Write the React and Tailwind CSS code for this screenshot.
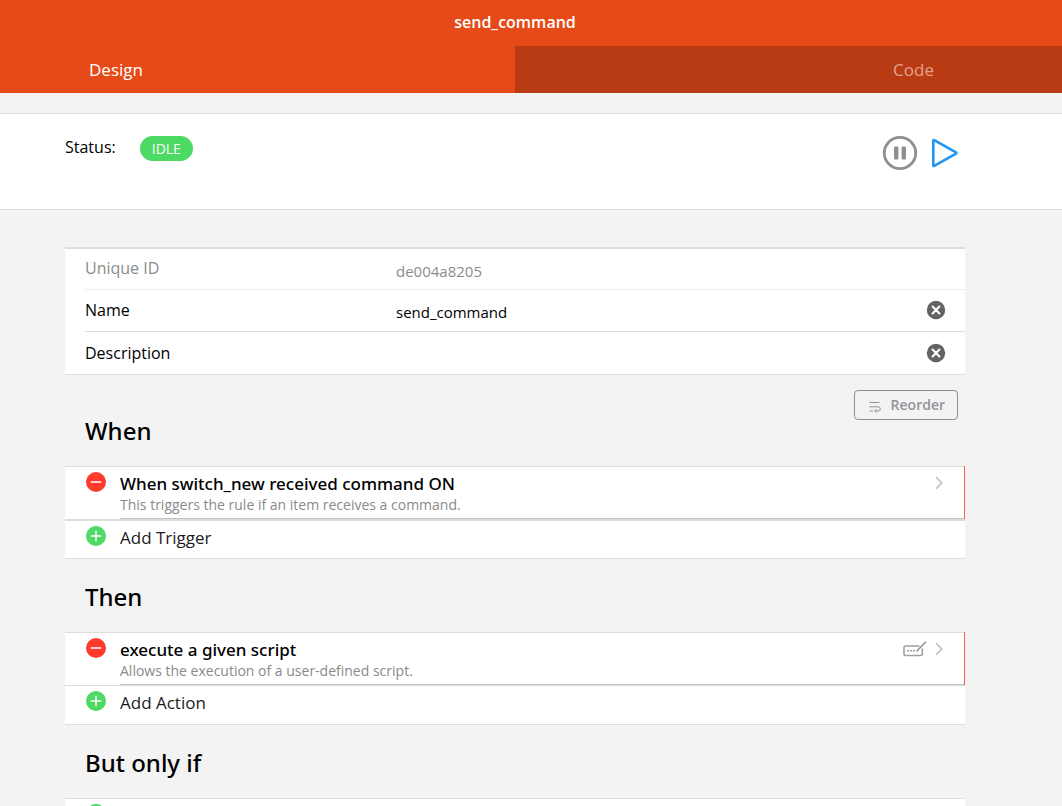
import React from "react";

function PauseCircleIcon() {
  return (
    <svg className="size-9" viewBox="0 0 36 36" aria-hidden="true">
      <circle cx="18" cy="18" r="15.7" fill="none" stroke="#8e8e93" strokeWidth="2.8" />
      <rect x="12" y="11.5" width="4.4" height="13" rx="1" fill="#8e8e93" />
      <rect x="19.6" y="11.5" width="4.4" height="13" rx="1" fill="#8e8e93" />
    </svg>
  );
}

function PlayIcon() {
  return (
    <svg className="h-9 w-7" viewBox="0 0 28 36" aria-hidden="true">
      <path
        d="M2.3 5.6 V30.4 Q2.3 31.3 3.2 30.8 L25 18.6 Q26 18 25 17.4 L3.2 5.2 Q2.3 4.7 2.3 5.6 Z"
        fill="none"
        stroke="#2196f3"
        strokeWidth="2.6"
        strokeLinejoin="round"
      />
    </svg>
  );
}

function ClearIcon() {
  return (
    <svg className="size-5" viewBox="0 0 20 20" aria-hidden="true">
      <circle cx="10" cy="10" r="9.2" fill="#636366" />
      <path d="M6.6 6.6 L13.4 13.4 M13.4 6.6 L6.6 13.4" stroke="#fff" strokeWidth="2.1" strokeLinecap="round" />
    </svg>
  );
}

function MinusIcon() {
  return (
    <svg className="size-5" viewBox="0 0 20 20" aria-hidden="true">
      <circle cx="10" cy="10" r="10" fill="#ff3b30" />
      <path d="M5.3 10 H14.7" stroke="#fff" strokeWidth="1.5" strokeLinecap="round" />
    </svg>
  );
}

function PlusIcon() {
  return (
    <svg className="size-5" viewBox="0 0 20 20" aria-hidden="true">
      <circle cx="10" cy="10" r="10" fill="#4cd964" />
      <path d="M5.3 10 H14.7 M10 5.3 V14.7" stroke="#fff" strokeWidth="1.5" strokeLinecap="round" />
    </svg>
  );
}

function ChevronIcon() {
  return (
    <svg className="h-3.5 w-2" viewBox="0 0 8 14" fill="none" aria-hidden="true">
      <path d="M1 1.2 L6.8 7 L1 12.8" stroke="#c7c7cc" strokeWidth="1.8" />
    </svg>
  );
}

function ScriptIcon() {
  return (
    <svg className="h-4 w-6" viewBox="0 0 24 16" fill="none" stroke="#a0a0a4" aria-hidden="true">
      <path d="M16.5 5 H2.5 Q1 5 1 6.5 V13 Q1 14.5 2.5 14.5 H17.5 Q19.3 14.5 19.3 12.8 V7.5" strokeWidth="1.6" />
      <path d="M23 0.8 L15 8.8 L13.6 10.4" stroke="#8e8e93" strokeWidth="1.5" />
      <path d="M4 9.8 H6 M7 9.8 H9 M10 9.8 H12" strokeWidth="1.6" />
    </svg>
  );
}

function ReorderIcon() {
  return (
    <svg className="mt-1 h-3 w-3" viewBox="0 0 12 12" fill="none" stroke="#8e8e93" aria-hidden="true">
      <path d="M0.5 1.5 H10.5 M0.5 5.8 H9.3 Q11.3 5.8 11.3 7.9 Q11.3 10 9.3 10 H6.3 M0.5 10 H4 M7.5 8.2 L5.7 10 L7.5 11.8" />
    </svg>
  );
}

function Field({ id, label, value, disabled, last }) {
  return (
    <li className="pl-5">
      <div
        className={
          "flex items-center pr-5 " +
          (last
            ? "h-[42px]"
            : disabled
              ? "h-[41px] border-b border-[#efefef]"
              : "h-[42px] border-b border-[#dedede]")
        }
      >
        <label
          htmlFor={id}
          className={
            "w-[311px] shrink-0 text-base " + (last ? "" : "pb-0.5 ") + (disabled ? "text-[#8c8c8c]" : "text-black")
          }
        >
          {label}
        </label>
        <input
          id={id}
          defaultValue={value}
          disabled={disabled}
          className={
            "min-w-0 flex-1 bg-transparent pt-1 text-[15px] outline-none " +
            (disabled ? "text-[#8c8c8c]" : "text-black")
          }
        />
        {!disabled && (
          <button type="button" aria-label={"Clear " + label} className={"-mr-px " + (last ? "" : "pb-0.5")}>
            <ClearIcon />
          </button>
        )}
      </div>
    </li>
  );
}

function Module({ title, description, script }) {
  return (
    <li className="relative flex pl-[21px]">
      <button type="button" aria-label={"Remove " + title} className="mt-[5px] size-5 shrink-0">
        <MinusIcon />
      </button>
      <a href="#module" className="ml-3.5 flex h-[52px] min-w-0 flex-1 border-b border-[#c4c4c4] pr-[22px]">
        <span className="min-w-0 flex-1 pt-1.5">
          <span className="block font-['Noto_Sans','Open_Sans',sans-serif] text-[17px]/[22px] font-medium text-black">
            {title}
          </span>
          <span className="block text-sm/5 text-[#8a8a8a]">{description}</span>
        </span>
        <span className="mt-2 flex h-4 items-center gap-2">
          {script && <ScriptIcon />}
          <ChevronIcon />
        </span>
      </a>
      <span className="absolute -top-px right-0 bottom-0 w-px bg-[#ff5a50]" />
    </li>
  );
}

function AddRow({ label, name, divider }) {
  return (
    <button
      type="button"
      aria-label={name}
      className={
        "flex h-[39px] w-full gap-3.5 border-[#dedede] pt-[5px] pl-[21px] text-left " +
        (divider === "thick" ? "border-t-2" : divider === "thin" ? "border-t" : "")
      }
    >
      <PlusIcon />
      {label && <span className="text-[17px]/6 text-[#1c1c1c]">{label}</span>}
    </button>
  );
}

function Section({ title, children }) {
  return (
    <section className="mb-[73px]">
      <h2 className="flex h-0 items-end pl-5 font-['Noto_Sans','Open_Sans',sans-serif] text-2xl font-medium text-black">
        <span className="mb-[19px]">{title}</span>
      </h2>
      <ul className="border-y border-[#dedede] bg-white">{children}</ul>
    </section>
  );
}

export default function App() {
  return (
    <div className="h-screen overflow-hidden bg-[#f3f3f3] font-['Open_Sans','Noto_Sans',sans-serif]">
      <header className="bg-[#e64a19] text-white">
        <h1 className="h-[46px] pr-8 text-center text-base/[44px] font-semibold">send_command</h1>
        <nav className="flex h-[47px] text-[17px]">
          <button type="button" className="w-[calc(50%-16px)] pl-[89px] text-left">
            Design
          </button>
          <button type="button" className="flex-1 bg-[#b83b14] pr-32 text-right text-[#e3a18c]">
            Code
          </button>
        </nav>
      </header>

      <section className="mt-5 h-[97px] border-y border-[#dedede] bg-white pr-8">
        <div className="mx-auto flex max-w-[900px] items-start pt-[21px]">
          <span className="text-base/6">Status:</span>
          <span className="mt-px ml-6 flex h-[25px] items-center rounded-full bg-[#4cd964] px-3 text-sm text-white">
            IDLE
          </span>
          <span className="flex-1" />
          <button type="button" aria-label="Pause">
            <PauseCircleIcon />
          </button>
          <button type="button" aria-label="Run" className="mr-1.5 ml-[13px]">
            <PlayIcon />
          </button>
        </div>
      </section>

      <main className="pr-8">
        <div className="mx-auto max-w-[900px]">
          <ul className="mt-[37px] border-t-2 border-b border-[#dedede] bg-white">
            <Field id="uid" label="Unique ID" value="de004a8205" disabled />
            <Field id="name" label="Name" value="send_command" />
            <Field id="description" label="Description" value="" last />
          </ul>

          <div className="mt-[15px] mb-[46px] flex justify-end pr-[7px]">
            <button
              type="button"
              className="flex h-[30px] items-center gap-2.5 rounded border border-[#8e8e93] px-3 pl-3.5 text-sm font-semibold text-[#939398]"
            >
              <ReorderIcon />
              Reorder
            </button>
          </div>

          <Section title="When">
            <Module
              title="When switch_new received command ON"
              description="This triggers the rule if an item receives a command."
            />
            <li>
              <AddRow label="Add Trigger" divider="thick" />
            </li>
          </Section>

          <Section title="Then">
            <Module title="execute a given script" description="Allows the execution of a user-defined script." script />
            <li>
              <AddRow label="Add Action" divider="thin" />
            </li>
          </Section>

          <Section title="But only if">
            <li>
              <AddRow name="Add Condition" />
            </li>
          </Section>
        </div>
      </main>
    </div>
  );
}
